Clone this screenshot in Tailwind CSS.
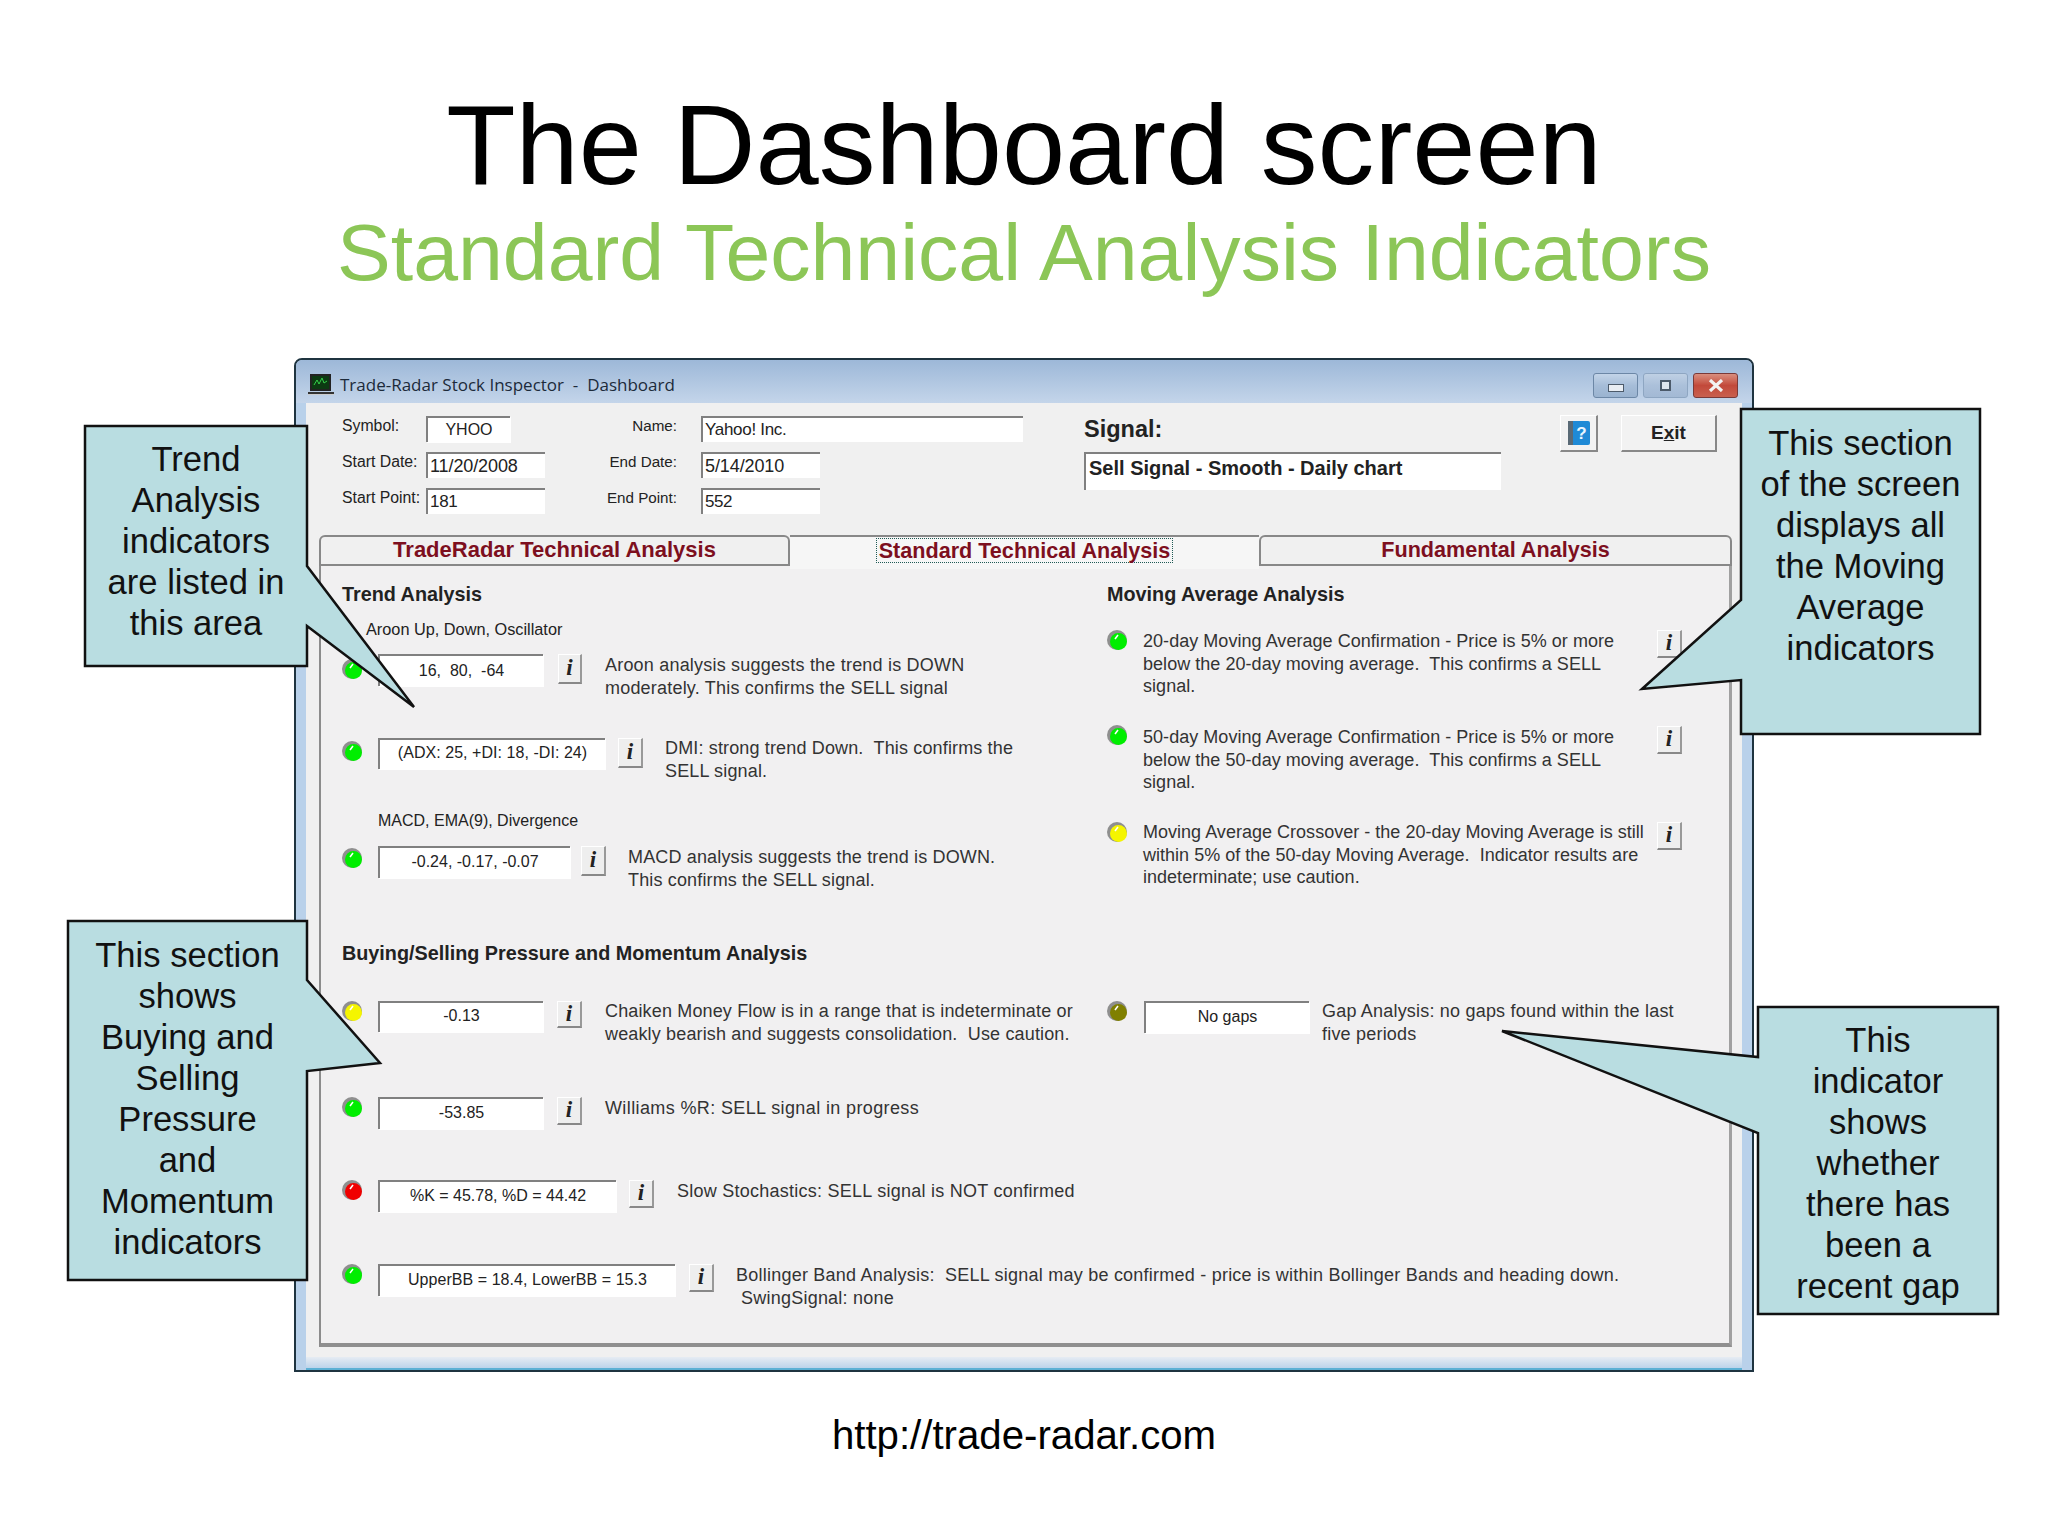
<!DOCTYPE html>
<html lang="en">

<head>
  <meta charset="UTF-8">
  <title>The Dashboard screen</title>
  <script src="https://cdn.jsdelivr.net/npm/@tailwindcss/browser@4"></script>
</head>

<body class="relative w-[2048px] h-[1536px] overflow-hidden bg-white font-['Liberation_Sans',sans-serif] text-black">
  <!-- slide heading -->
  <header class="h-[358px] pt-[80px] text-center">
    <h1 class="text-[113.6px] leading-[130px] text-black">The Dashboard screen</h1>
    <h2 class="-mt-[8px] text-[80.6px] leading-[100px] text-[#8cc657]">Standard Technical Analysis Indicators</h2>
  </header>

  <!-- window -->
  <div class="ml-[294px] w-[1460px] h-[1014px] rounded-t-[8px] border-2 border-[#1f3440] bg-[#b9d1ea]">
    <div class="h-[43px] pt-[7px] flex items-center bg-gradient-to-b from-[#9db8d8] to-[#c4d5ea] rounded-t-[6px]">
      <svg class="ml-[12px] w-[26px] h-[24px]" viewBox="0 0 26 24">
        <rect x="2" y="1" width="21" height="17" fill="#222"/>
        <rect x="4" y="3" width="17" height="13" fill="#0c3a12"/>
        <path d="M6 12l3-5 2 4 3-6 2 5 3-2" stroke="#35d04a" fill="none"/>
        <rect x="0" y="19" width="26" height="2" fill="#333"/>
        <rect x="0" y="21" width="26" height="1" fill="#ccc"/>
      </svg>
      <span class="ml-[6px] font-['Open_Sans',sans-serif] text-[17px] text-[#1c2a3a] whitespace-pre">Trade-Radar Stock Inspector  -  Dashboard</span>
      <div class="ml-auto mr-[14px] flex gap-[5px]">
        <div class="w-[45px] h-[25px] rounded-[3px] border border-[#6c87a6] bg-gradient-to-b from-[#c3d4e8] via-[#a6bdd8] to-[#9ab3d0] flex items-center justify-center">
          <div class="mt-[6px] w-[16px] h-[8px] border border-[#4c5a6a] bg-[#e8edf3]"></div>
        </div>
        <div class="w-[45px] h-[25px] rounded-[3px] border border-[#8ea6c2] bg-gradient-to-b from-[#bfd0e4] via-[#abc0da] to-[#a3b9d4] flex items-center justify-center">
          <div class="w-[11px] h-[11px] border-2 border-[#4c5a6a] bg-[#dfe6ee]"></div>
        </div>
        <div class="w-[45px] h-[25px] rounded-[3px] border border-[#7a3a38] bg-gradient-to-b from-[#d98e7e] via-[#c2493a] to-[#c9604f] flex items-center justify-center">
          <svg class="w-[16px] h-[13px]" viewBox="0 0 16 13"><path d="M2 1l12 11M14 1L2 12" stroke="#f2f2f2" stroke-width="3.2"/></svg>
        </div>
      </div>
    </div>

    <div class="mx-[10px] h-[954px] bg-[#f0f0f0]">
      <!-- form fields -->
      <div class="h-[132px] flex">
        <div class="ml-[36px] w-[203px] pt-[13px] flex flex-col gap-[10px]">
          <div class="flex items-center h-[26px]">
            <span class="w-[84px] -mt-[6px] text-[15.8px] text-[#222]">Symbol:</span>
            <div class="w-[84px] h-[26px] border-t-2 border-l-2 border-[#808080] bg-white shadow-[1px_1px_0_#fff] flex items-center justify-center text-[16px] text-[#222]">YHOO</div>
          </div>
          <div class="flex items-center h-[26px]">
            <span class="w-[84px] -mt-[6px] text-[15.8px] text-[#222] whitespace-nowrap">Start Date:</span>
            <div class="w-[119px] h-[26px] border-t-2 border-l-2 border-[#808080] bg-white flex items-center pl-[2px] text-[18px] tracking-[-0.1px] text-[#222]">11/20/2008</div>
          </div>
          <div class="flex items-center h-[26px]">
            <span class="w-[84px] -mt-[6px] text-[15.8px] text-[#222] whitespace-nowrap">Start Point:</span>
            <div class="w-[119px] h-[26px] border-t-2 border-l-2 border-[#808080] bg-white flex items-center pl-[2px] text-[17px] tracking-[-0.3px] text-[#222]">181</div>
          </div>
        </div>
        <div class="w-[478px] pt-[13px] flex flex-col gap-[10px]">
          <div class="flex items-center h-[26px]">
            <span class="w-[132px] -mt-[6px] text-right text-[15.2px] text-[#222]">Name:</span>
            <div class="ml-[24px] w-[322px] h-[26px] border-t-2 border-l-2 border-[#808080] bg-white flex items-center pl-[2px] text-[17px] tracking-[-0.3px] text-[#222]">Yahoo! Inc.</div>
          </div>
          <div class="flex items-center h-[26px]">
            <span class="w-[132px] -mt-[6px] text-right text-[15.2px] text-[#222]">End Date:</span>
            <div class="ml-[24px] w-[119px] h-[26px] border-t-2 border-l-2 border-[#808080] bg-white flex items-center pl-[2px] text-[18px] tracking-[-0.1px] text-[#222]">5/14/2010</div>
          </div>
          <div class="flex items-center h-[26px]">
            <span class="w-[132px] -mt-[6px] text-right text-[15.2px] text-[#222]">End Point:</span>
            <div class="ml-[24px] w-[119px] h-[26px] border-t-2 border-l-2 border-[#808080] bg-white flex items-center pl-[2px] text-[17px] tracking-[-0.5px] text-[#222]">552</div>
          </div>
        </div>
        <div class="ml-[61px] w-[417px] pt-[11px]">
          <div class="h-[30px] text-[23.5px] leading-[30px] font-bold text-[#222]">Signal:</div>
          <div class="mt-[8px] h-[38px] border-t-2 border-l-2 border-[#808080] bg-white pl-[3px] text-[20px] leading-[28px] font-bold text-[#222]">Sell Signal - Smooth - Daily chart</div>
        </div>
        <div class="ml-[59px] mt-[12px] w-[38px] h-[37px] bg-[#f2f2f2] border-t border-l border-white border-r-2 border-b-2 border-r-[#888] border-b-[#888] flex items-center justify-center">
          <svg class="w-[24px] h-[26px]" viewBox="0 0 24 26">
            <rect x="1" y="1" width="22" height="24" rx="2" fill="#1f8ad6"/>
            <rect x="1" y="1" width="5" height="24" fill="#5a6a76"/>
            <text x="14.5" y="19" text-anchor="middle" font-size="17" font-weight="700" font-family="Liberation Sans" fill="#eaf6ff">?</text>
          </svg>
        </div>
        <div class="ml-[23px] mt-[12px] w-[96px] h-[37px] bg-[#f2f2f2] border-t border-l border-white border-r-2 border-b-2 border-r-[#888] border-b-[#888] flex items-center justify-center text-[19px] font-bold text-[#222]"><span>E<u>x</u>it</span></div>
      </div>

      <!-- tabs -->
      <div class="ml-[13px] w-[1413px] h-[31px] flex items-stretch">
        <div class="w-[471px] pb-[2px] rounded-t-[6px] border-t-2 border-l-2 border-r-2 border-b-2 border-[#888] flex items-center justify-center text-[22px] leading-none font-bold text-[#7d0f1e]">TradeRadar Technical Analysis</div>
        <div class="relative z-10 w-[469px] h-[34px] pb-[5px] bg-[#f6f6f6] border-t-2 border-[#888] flex items-center justify-center">
          <span class="px-[2px] h-[25px] border border-dotted border-[#1f5a55] text-[21.6px] leading-[23px] font-bold text-[#7d0f1e]">Standard Technical Analysis</span>
        </div>
        <div class="w-[473px] pb-[2px] rounded-t-[6px] border-t-2 border-l-2 border-r-2 border-b-2 border-[#888] flex items-center justify-center text-[21.6px] leading-none font-bold text-[#7d0f1e]">Fundamental Analysis</div>
      </div>

      <!-- tab panel -->
      <div class="ml-[13px] w-[1413px] h-[781px] bg-[#f1f0f1] border-l-2 border-[#8c8c8c] border-r-[3px] border-b-[4px] border-r-[#a0a0a0] border-b-[#8f8f8f]">
        <div class="h-[375px] flex">
          <!-- trend analysis -->
          <div class="w-[786px] pl-[21px] pt-[16px]">
            <h3 class="h-[24px] text-[19.8px] leading-[24px] font-bold text-[#222]">Trend Analysis</h3>
            <p class="mt-[13px] ml-[24px] h-[19px] text-[16.3px] leading-[20px] text-[#222]">Aroon Up, Down, Oscillator</p>
            <div class="mt-[16px] h-[45px] flex items-start">
              <svg class="mt-[5px] w-[20px] h-[20px] shrink-0" viewBox="0 0 20 20"><circle cx="10" cy="10" r="10" fill="#8f8f8f"/><circle cx="11.5" cy="11.5" r="8.5" fill="#00ee00"/><path d="M8 9l3-4" stroke="#fff" stroke-width="1.5"/></svg>
              <div class="ml-[16px] w-[165px] h-[32px] pb-[1px] border-t-2 border-l-2 border-[#808080] bg-white shadow-[1px_1px_0_#fff] flex items-center justify-center text-[16px] text-[#222] whitespace-pre">16,  80,  -64</div>
              <div class="ml-[15px] w-[24px] h-[30px] bg-[#eee] border-t border-l border-white border-r-2 border-b-2 border-r-[#999] border-b-[#888] flex items-center justify-center font-['Liberation_Serif',serif] italic font-bold text-[23px] text-[#222]">i</div>
              <p class="ml-[23px] text-[18px] leading-[22.5px] tracking-[0.2px] text-[#333]">Aroon analysis suggests the trend is DOWN<br>moderately. This confirms the SELL signal</p>
            </div>
            <div class="mt-[39px] h-[45px] flex items-start">
              <svg class="mt-[3px] w-[20px] h-[20px] shrink-0" viewBox="0 0 20 20"><circle cx="10" cy="10" r="10" fill="#8f8f8f"/><circle cx="11.5" cy="11.5" r="8.5" fill="#00ee00"/><path d="M8 9l3-4" stroke="#fff" stroke-width="1.5"/></svg>
              <div class="ml-[16px] w-[227px] h-[31px] pb-[3px] border-t-2 border-l-2 border-[#808080] bg-white shadow-[1px_1px_0_#fff] flex items-center justify-center text-[16px] tracking-[0.05px] text-[#222]">(ADX: 25, +DI: 18, -DI: 24)</div>
              <div class="ml-[13px] w-[25px] h-[30px] bg-[#eee] border-t border-l border-white border-r-2 border-b-2 border-r-[#999] border-b-[#888] flex items-center justify-center font-['Liberation_Serif',serif] italic font-bold text-[23px] text-[#222]">i</div>
              <p class="ml-[22px] -mt-[1px] text-[18px] leading-[22.5px] tracking-[0.15px] text-[#333] whitespace-pre">DMI: strong trend Down.  This confirms the<br>SELL signal.</p>
            </div>
            <p class="mt-[28px] ml-[36px] h-[19px] text-[16px] leading-[20px] text-[#222]">MACD, EMA(9), Divergence</p>
            <div class="mt-[16px] h-[45px] flex items-start">
              <svg class="mt-[2px] w-[20px] h-[20px] shrink-0" viewBox="0 0 20 20"><circle cx="10" cy="10" r="10" fill="#8f8f8f"/><circle cx="11.5" cy="11.5" r="8.5" fill="#00ee00"/><path d="M8 9l3-4" stroke="#fff" stroke-width="1.5"/></svg>
              <div class="ml-[16px] w-[192px] h-[32px] pb-[3px] border-t-2 border-l-2 border-[#808080] bg-white shadow-[1px_1px_0_#fff] flex items-center justify-center text-[16px] text-[#222]">-0.24, -0.17, -0.07</div>
              <div class="ml-[11px] w-[25px] h-[30px] bg-[#eee] border-t border-l border-white border-r-2 border-b-2 border-r-[#999] border-b-[#888] flex items-center justify-center font-['Liberation_Serif',serif] italic font-bold text-[23px] text-[#222]">i</div>
              <p class="ml-[22px] text-[18px] leading-[22.5px] tracking-[0.15px] text-[#333]">MACD analysis suggests the trend is DOWN.<br>This confirms the SELL signal.</p>
            </div>
          </div>
          <!-- moving average analysis -->
          <div class="flex-1 pt-[16px]">
            <h3 class="h-[24px] text-[19.8px] leading-[24px] font-bold text-[#222]">Moving Average Analysis</h3>
            <div class="mt-[24px] h-[68px] flex items-start">
              <svg class="w-[20px] h-[20px] shrink-0" viewBox="0 0 20 20"><circle cx="10" cy="10" r="10" fill="#8f8f8f"/><circle cx="11.5" cy="11.5" r="8.5" fill="#00ee00"/><path d="M8 9l3-4" stroke="#fff" stroke-width="1.5"/></svg>
              <p class="ml-[16px] w-[514px] text-[18px] leading-[22.5px] tracking-[0.04px] text-[#333] whitespace-pre">20-day Moving Average Confirmation - Price is 5% or more<br>below the 20-day moving average.  This confirms a SELL<br>signal.</p>
              <div class="w-[25px] h-[28px] bg-[#eee] border-t border-l border-white border-r-2 border-b-2 border-r-[#999] border-b-[#888] flex items-center justify-center font-['Liberation_Serif',serif] italic font-bold text-[23px] text-[#222]">i</div>
            </div>
            <div class="mt-[28px] h-[68px] flex items-start">
              <svg class="-mt-[1px] w-[20px] h-[20px] shrink-0" viewBox="0 0 20 20"><circle cx="10" cy="10" r="10" fill="#8f8f8f"/><circle cx="11.5" cy="11.5" r="8.5" fill="#00ee00"/><path d="M8 9l3-4" stroke="#fff" stroke-width="1.5"/></svg>
              <p class="ml-[16px] w-[514px] text-[18px] leading-[22.5px] tracking-[0.04px] text-[#333] whitespace-pre">50-day Moving Average Confirmation - Price is 5% or more<br>below the 50-day moving average.  This confirms a SELL<br>signal.</p>
              <div class="w-[25px] h-[28px] bg-[#eee] border-t border-l border-white border-r-2 border-b-2 border-r-[#999] border-b-[#888] flex items-center justify-center font-['Liberation_Serif',serif] italic font-bold text-[23px] text-[#222]">i</div>
            </div>
            <div class="mt-[28px] h-[68px] flex items-start">
              <svg class="w-[20px] h-[20px] shrink-0" viewBox="0 0 20 20"><circle cx="10" cy="10" r="10" fill="#8f8f8f"/><circle cx="11.5" cy="11.5" r="8.5" fill="#f5f500"/><path d="M8 9l3-4" stroke="#fff" stroke-width="1.5"/></svg>
              <p class="ml-[16px] w-[514px] -mt-[1px] text-[18px] leading-[22.5px] tracking-[0.02px] text-[#333] whitespace-pre">Moving Average Crossover - the 20-day Moving Average is still<br>within 5% of the 50-day Moving Average.  Indicator results are<br>indeterminate; use caution.</p>
              <div class="w-[25px] h-[28px] bg-[#eee] border-t border-l border-white border-r-2 border-b-2 border-r-[#999] border-b-[#888] flex items-center justify-center font-['Liberation_Serif',serif] italic font-bold text-[23px] text-[#222]">i</div>
            </div>
          </div>
        </div>

        <!-- buying / selling pressure -->
        <div class="pl-[21px]">
          <h3 class="h-[24px] text-[19.8px] leading-[24px] font-bold text-[#222]">Buying/Selling Pressure and Momentum Analysis</h3>
          <div class="mt-[36px] h-[45px] flex">
            <div class="w-[765px] flex items-start">
              <svg class="w-[20px] h-[20px] shrink-0" viewBox="0 0 20 20"><circle cx="10" cy="10" r="10" fill="#8f8f8f"/><circle cx="11.5" cy="11.5" r="8.5" fill="#f5f500"/><path d="M8 9l3-4" stroke="#fff" stroke-width="1.5"/></svg>
              <div class="ml-[16px] w-[165px] h-[31px] pb-[3px] border-t-2 border-l-2 border-[#808080] bg-white shadow-[1px_1px_0_#fff] flex items-center justify-center text-[16px] text-[#222]">-0.13</div>
              <div class="ml-[14px] w-[25px] h-[27px] bg-[#eee] border-t border-l border-white border-r-2 border-b-2 border-r-[#999] border-b-[#888] flex items-center justify-center font-['Liberation_Serif',serif] italic font-bold text-[23px] text-[#222]">i</div>
              <p class="ml-[23px] -mt-[1px] text-[18px] leading-[22.5px] tracking-[0.15px] text-[#333] whitespace-pre">Chaiken Money Flow is in a range that is indeterminate or<br>weakly bearish and suggests consolidation.  Use caution.</p>
            </div>
            <div class="flex items-start">
              <svg class="w-[20px] h-[20px] shrink-0" viewBox="0 0 20 20"><circle cx="10" cy="10" r="10" fill="#8f8f8f"/><circle cx="11.5" cy="11.5" r="8.5" fill="#808000"/><path d="M8 9l3-4" stroke="#fff" stroke-width="1.5"/></svg>
              <div class="ml-[17px] w-[165px] h-[32px] pb-[3px] border-t-2 border-l-2 border-[#808080] bg-white shadow-[1px_1px_0_#fff] flex items-center justify-center text-[16px] text-[#222]">No gaps</div>
              <p class="ml-[13px] -mt-[1px] text-[18px] leading-[22.5px] tracking-[0.2px] text-[#333] whitespace-nowrap">Gap Analysis: no gaps found within the last<br>five periods</p>
            </div>
          </div>
          <div class="mt-[51px] h-[45px] flex items-start">
            <svg class="w-[20px] h-[20px] shrink-0" viewBox="0 0 20 20"><circle cx="10" cy="10" r="10" fill="#8f8f8f"/><circle cx="11.5" cy="11.5" r="8.5" fill="#00ee00"/><path d="M8 9l3-4" stroke="#fff" stroke-width="1.5"/></svg>
            <div class="ml-[16px] w-[165px] h-[32px] pb-[3px] border-t-2 border-l-2 border-[#808080] bg-white shadow-[1px_1px_0_#fff] flex items-center justify-center text-[16px] text-[#222]">-53.85</div>
            <div class="ml-[14px] w-[25px] h-[28px] bg-[#eee] border-t border-l border-white border-r-2 border-b-2 border-r-[#999] border-b-[#888] flex items-center justify-center font-['Liberation_Serif',serif] italic font-bold text-[23px] text-[#222]">i</div>
            <p class="ml-[23px] text-[18px] leading-[22.5px] tracking-[0.38px] text-[#333]">Williams %R: SELL signal in progress</p>
          </div>
          <div class="mt-[38px] h-[45px] flex items-start">
            <svg class="w-[20px] h-[20px] shrink-0" viewBox="0 0 20 20"><circle cx="10" cy="10" r="10" fill="#8f8f8f"/><circle cx="11.5" cy="11.5" r="8.5" fill="#f00000"/><path d="M8 9l3-4" stroke="#fff" stroke-width="1.5"/></svg>
            <div class="ml-[16px] w-[238px] h-[32px] pb-[3px] border-t-2 border-l-2 border-[#808080] bg-white shadow-[1px_1px_0_#fff] flex items-center justify-center text-[16px] text-[#222]">%K = 45.78, %D = 44.42</div>
            <div class="ml-[13px] w-[25px] h-[28px] bg-[#eee] border-t border-l border-white border-r-2 border-b-2 border-r-[#999] border-b-[#888] flex items-center justify-center font-['Liberation_Serif',serif] italic font-bold text-[23px] text-[#222]">i</div>
            <p class="ml-[23px] text-[18px] leading-[22.5px] tracking-[0.25px] text-[#333]">Slow Stochastics: SELL signal is NOT confirmed</p>
          </div>
          <div class="mt-[39px] h-[45px] flex items-start">
            <svg class="w-[20px] h-[20px] shrink-0" viewBox="0 0 20 20"><circle cx="10" cy="10" r="10" fill="#8f8f8f"/><circle cx="11.5" cy="11.5" r="8.5" fill="#00ee00"/><path d="M8 9l3-4" stroke="#fff" stroke-width="1.5"/></svg>
            <div class="ml-[16px] w-[297px] h-[32px] pb-[3px] border-t-2 border-l-2 border-[#808080] bg-white shadow-[1px_1px_0_#fff] flex items-center justify-center text-[16px] tracking-[0.05px] text-[#222]">UpperBB = 18.4, LowerBB = 15.3</div>
            <div class="ml-[14px] w-[25px] h-[28px] bg-[#eee] border-t border-l border-white border-r-2 border-b-2 border-r-[#999] border-b-[#888] flex items-center justify-center font-['Liberation_Serif',serif] italic font-bold text-[23px] text-[#222]">i</div>
            <p class="ml-[22px] text-[18px] leading-[22.5px] tracking-[0.23px] text-[#333] whitespace-pre">Bollinger Band Analysis:  SELL signal may be confirmed - price is within Bollinger Bands and heading down.<br><span class="ml-[5px]">SwingSignal: none</span></p>
          </div>
        </div>
      </div>
    </div>
    <div class="mx-[10px] h-[13px] border-b-2 border-[#5cb0d4] bg-gradient-to-b from-[#e6ecf3] to-[#bcd3ea]"></div>
  </div>

  <footer class="mt-[41px] text-center text-[40.2px] leading-[46px] text-black">http://trade-radar.com</footer>

  <!-- callouts over the window -->
  <div class="absolute left-[85px] top-[426px] w-[329px] h-[281px]">
    <svg class="absolute inset-0 overflow-visible" width="329" height="281"><polygon points="0,0 222,0 222,140 329,281 222,200 222,240 0,240" fill="#b9dde1" stroke="#111" stroke-width="2.5"/></svg>
    <p class="absolute left-0 top-[13px] w-[222px] text-center text-[34.6px] leading-[41px] text-[#111]">Trend<br>Analysis<br>indicators<br>are listed in<br>this area</p>
  </div>
  <div class="absolute left-[1642px] top-[409px] w-[338px] h-[325px]">
    <svg class="absolute inset-0 overflow-visible" width="338" height="325"><polygon points="99,0 338,0 338,325 99,325 99,271 0,280 99,191" fill="#b9dde1" stroke="#111" stroke-width="2.5"/></svg>
    <p class="absolute left-[99px] top-[14px] w-[239px] text-center text-[34.6px] leading-[41px] text-[#111]">This section<br>of the screen<br>displays all<br>the Moving<br>Average<br>indicators</p>
  </div>
  <div class="absolute left-[68px] top-[921px] w-[312px] h-[359px]">
    <svg class="absolute inset-0 overflow-visible" width="312" height="359"><polygon points="0,0 239,0 239,59 312,142 239,150 239,359 0,359" fill="#b9dde1" stroke="#111" stroke-width="2.5"/></svg>
    <p class="absolute left-0 top-[14px] w-[239px] text-center text-[34.6px] leading-[41px] text-[#111]">This section<br>shows<br>Buying and<br>Selling<br>Pressure<br>and<br>Momentum<br>indicators</p>
  </div>
  <div class="absolute left-[1502px] top-[1007px] w-[496px] h-[307px]">
    <svg class="absolute inset-0 overflow-visible" width="496" height="307"><polygon points="256,0 496,0 496,307 256,307 256,126 0,24 256,50" fill="#b9dde1" stroke="#111" stroke-width="2.5"/></svg>
    <p class="absolute left-[256px] top-[13px] w-[240px] text-center text-[34.6px] leading-[41px] text-[#111]">This<br>indicator<br>shows<br>whether<br>there has<br>been a<br>recent gap</p>
  </div>
</body>

</html>
